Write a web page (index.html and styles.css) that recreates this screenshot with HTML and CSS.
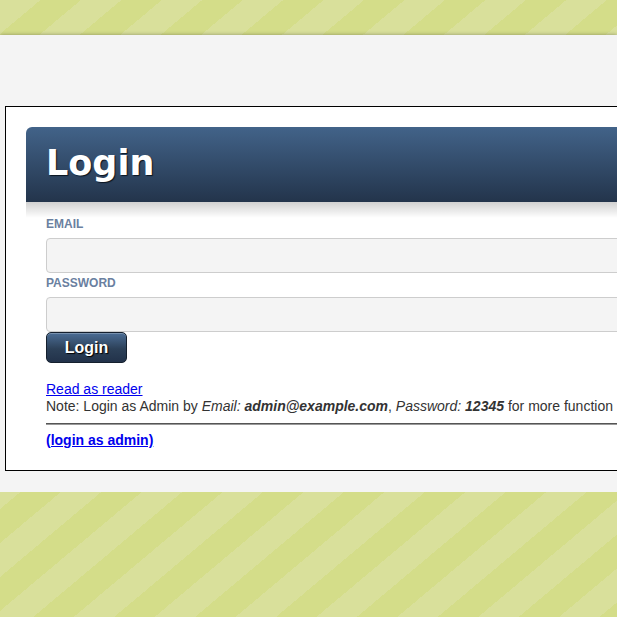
FILE: index.html
```html
<!DOCTYPE html>
<html lang="en">
<head>
<meta charset="utf-8">
<title>Login</title>
<link rel="stylesheet" href="styles.css">
</head>
<body>
<div class="main">
  <div class="panel">
    <div class="panel-head"><h1 class="title">Login</h1></div>
    <form class="login-form">
      <label class="field-label" for="email">EMAIL</label>
      <input class="field-input" id="email" type="text">
      <label class="field-label" for="password">PASSWORD</label>
      <input class="field-input" id="password" type="password">
      <button class="btn" type="button">Login</button>
    </form>
    <div class="notes">
      <a class="link" href="#">Read as reader</a><br>
      Note: Login as Admin by <em>Email:</em> <strong><em>admin@example.com</em></strong>, <em>Password:</em> <strong><em>12345</em></strong> for more function
      <hr class="rule">
      <a class="link link-bold" href="#">(login as admin)</a>
    </div>
  </div>
</div>
</body>
</html>
```
FILE: styles.css
```css
html, body {
  margin: 0;
  padding: 0;
  min-height: 100%;
}
body {
  overflow: hidden;
  background: repeating-linear-gradient(140deg, #d9e09b 0 26px, #d4dd89 26px 52px);
  font-family: "Liberation Sans", Arial, sans-serif;
  font-size: 14px;
  color: #333;
}
.main {
  margin-top: 35px;
  background: #f4f4f4;
  box-shadow: 0 0 4px rgba(0, 0, 0, 0.35);
  padding: 71px 0 21px 5px;
}
.panel {
  width: 1000px;
  background: #fff;
  border: 1px solid #000;
  padding: 20px 20px 21px;
}
.panel-head {
  position: relative;
  height: 75px;
  border-radius: 6px 6px 0 0;
  background: linear-gradient(#426389, #23344b);
  padding-left: 20px;
}
.panel-head::after {
  content: "";
  position: absolute;
  left: 0;
  right: 0;
  top: 100%;
  height: 16px;
  background: linear-gradient(rgba(0, 0, 0, 0.18), rgba(0, 0, 0, 0));
}
.title {
  margin: 0;
  font-family: "DejaVu Sans", Verdana, sans-serif;
  font-weight: bold;
  font-size: 35px;
  line-height: 73px;
  color: #fff;
  text-shadow: 1px 1px 1px #0b1420;
}
.login-form {
  padding: 12px 20px 0;
  display: flex;
  flex-direction: column;
  align-items: flex-start;
}
.field-label {
  font-weight: bold;
  font-size: 12px;
  line-height: 20px;
  color: #6a80a0;
}
.field-input {
  box-sizing: border-box;
  width: 100%;
  height: 35px;
  margin: 4px 0 0;
  border: 1px solid #cdcdcd;
  border-radius: 4px;
  background: #f4f4f4;
}
.btn {
  box-sizing: border-box;
  width: 81px;
  height: 31px;
  margin-top: 0;
  border: 1px solid #15202e;
  border-radius: 5px;
  background: linear-gradient(#4b6d95, #2c4058 55%, #22324a);
  box-shadow: inset 0 1px 0 rgba(255, 255, 255, 0.25);
  color: #fff;
  font-family: "Liberation Sans", Arial, sans-serif;
  font-weight: bold;
  font-size: 16px;
  text-shadow: 1px 1px 1px #000;
  padding: 0;
}
.notes {
  padding: 18px 20px 0;
  line-height: 17px;
}
.link {
  color: #0000ee;
}
.link-bold {
  font-weight: bold;
}
.rule {
  margin: 8px 0 7px;
  border: 0;
  border-top: 1px solid #555;
  border-bottom: 1px solid #999;
  height: 0;
}
```
